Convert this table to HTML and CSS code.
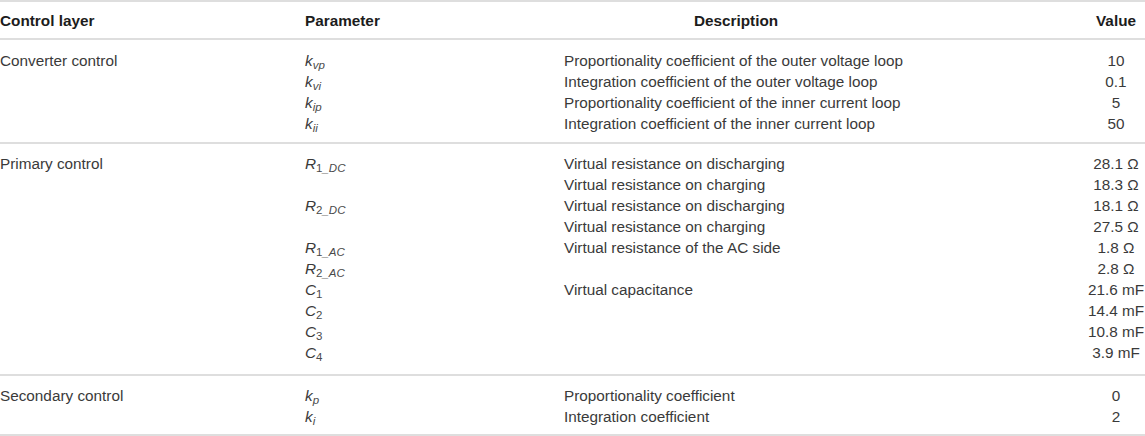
FILE: index.html
```html
<!DOCTYPE html>
<html lang="en">
<head>
<meta charset="utf-8">
<title>Control parameters</title>
<link rel="stylesheet" href="styles.css">
</head>
<body>
<table class="params">
  <colgroup>
    <col class="c-layer">
    <col class="c-param">
    <col class="c-desc">
    <col class="c-val">
  </colgroup>
  <thead>
    <tr>
      <th class="layer">Control layer</th>
      <th class="param">Parameter</th>
      <th class="desc">Description</th>
      <th class="val">Value</th>
    </tr>
  </thead>
  <tbody>
    <tr><td class="layer">Converter control</td><td class="param"><i>k</i><sub><i>vp</i></sub></td><td class="desc">Proportionality coefficient of the outer voltage loop</td><td class="val">10</td></tr>
    <tr><td class="layer"></td><td class="param"><i>k</i><sub><i>vi</i></sub></td><td class="desc">Integration coefficient of the outer voltage loop</td><td class="val">0.1</td></tr>
    <tr><td class="layer"></td><td class="param"><i>k</i><sub><i>ip</i></sub></td><td class="desc">Proportionality coefficient of the inner current loop</td><td class="val">5</td></tr>
    <tr><td class="layer"></td><td class="param"><i>k</i><sub><i>ii</i></sub></td><td class="desc">Integration coefficient of the inner current loop</td><td class="val">50</td></tr>
  </tbody>
  <tbody class="primary">
    <tr><td class="layer">Primary control</td><td class="param"><i>R</i><sub>1<i>_DC</i></sub></td><td class="desc">Virtual resistance on discharging</td><td class="val">28.1 Ω</td></tr>
    <tr><td class="layer"></td><td class="param"></td><td class="desc">Virtual resistance on charging</td><td class="val">18.3 Ω</td></tr>
    <tr><td class="layer"></td><td class="param"><i>R</i><sub>2<i>_DC</i></sub></td><td class="desc">Virtual resistance on discharging</td><td class="val">18.1 Ω</td></tr>
    <tr><td class="layer"></td><td class="param"></td><td class="desc">Virtual resistance on charging</td><td class="val">27.5 Ω</td></tr>
    <tr><td class="layer"></td><td class="param"><i>R</i><sub>1<i>_AC</i></sub></td><td class="desc">Virtual resistance of the AC side</td><td class="val">1.8 Ω</td></tr>
    <tr><td class="layer"></td><td class="param"><i>R</i><sub>2<i>_AC</i></sub></td><td class="desc"></td><td class="val">2.8 Ω</td></tr>
    <tr><td class="layer"></td><td class="param"><i>C</i><sub>1</sub></td><td class="desc">Virtual capacitance</td><td class="val">21.6 mF</td></tr>
    <tr><td class="layer"></td><td class="param"><i>C</i><sub>2</sub></td><td class="desc"></td><td class="val">14.4 mF</td></tr>
    <tr><td class="layer"></td><td class="param"><i>C</i><sub>3</sub></td><td class="desc"></td><td class="val">10.8 mF</td></tr>
    <tr><td class="layer"></td><td class="param"><i>C</i><sub>4</sub></td><td class="desc"></td><td class="val">3.9 mF</td></tr>
  </tbody>
  <tbody>
    <tr><td class="layer">Secondary control</td><td class="param"><i>k</i><sub><i>p</i></sub></td><td class="desc">Proportionality coefficient</td><td class="val">0</td></tr>
    <tr><td class="layer"></td><td class="param"><i>k</i><sub><i>i</i></sub></td><td class="desc">Integration coefficient</td><td class="val">2</td></tr>
  </tbody>
</table>
</body>
</html>
```

FILE: styles.css
```css
html, body {
  margin: 0;
  padding: 0;
  background: #ffffff;
}

body {
  font-family: "Liberation Sans", Arial, Helvetica, sans-serif;
  font-size: 15.3px;
  color: #3a3a3a;
}

.params {
  width: 1145px;
  table-layout: fixed;
  border-collapse: separate;
  border-spacing: 0;
}

.c-layer { width: 305px; }
.c-param { width: 259px; }
.c-desc  { width: 344px; }
.c-val   { width: 237px; }

.params th,
.params td {
  padding: 0;
  line-height: 21px;
  vertical-align: top;
  white-space: nowrap;
  text-align: left;
}

.params th {
  font-weight: bold;
  color: #1c1c1c;
  padding-top: 8px;
  padding-bottom: 7px;
  border-top: 2px solid #dedede;
  border-bottom: 2px solid #dedede;
}

.params th.desc {
  text-align: center;
}

.params .val {
  text-align: center;
  padding-left: 179px;
}

.params tbody tr:first-child td {
  padding-top: 10px;
}

.params tbody tr:last-child td {
  padding-bottom: 8px;
  border-bottom: 2px solid #dedede;
}

.params tbody + tbody tr:first-child td {
  padding-top: 9px;
}

.params tbody.primary tr:last-child td {
  padding-bottom: 11px;
}

.params tbody:last-child tr:last-child td {
  padding-bottom: 7px;
}

.param i {
  font-style: italic;
}

.param sub {
  font-size: 11.5px;
  line-height: 0;
  vertical-align: -3px;
  color: #4a4a4a;
}
```
